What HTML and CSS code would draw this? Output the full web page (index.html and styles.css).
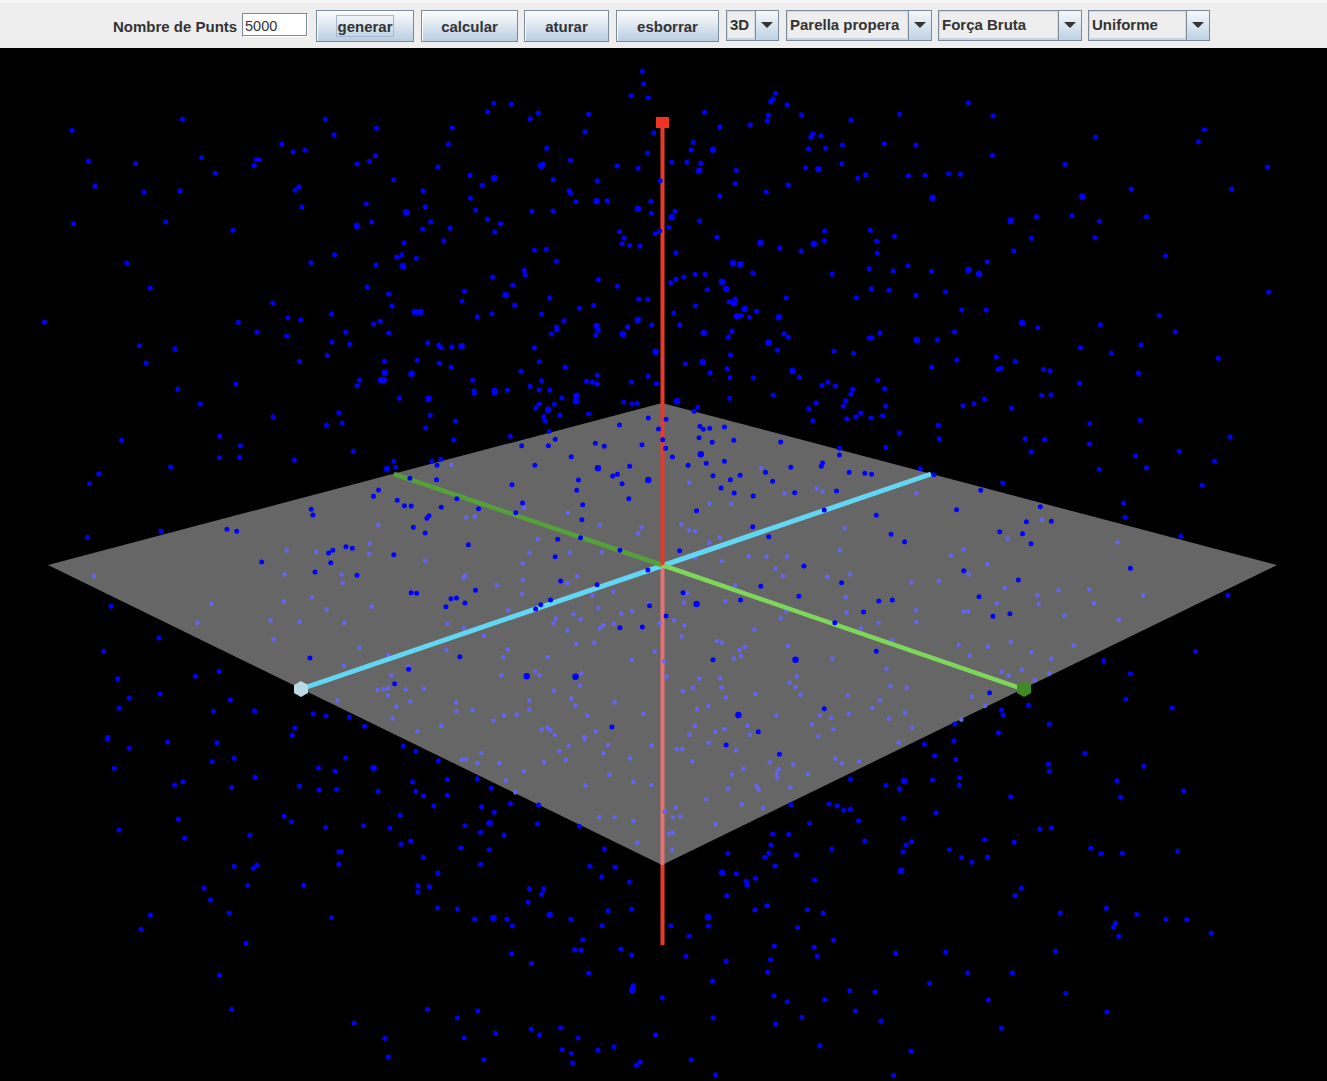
FILE: index.html
```html
<!DOCTYPE html>
<html lang="ca">
<head>
<meta charset="utf-8">
<title>Parella propera</title>
<link rel="stylesheet" href="styles.css">
</head>
<body>
<header class="toolbar">
  <span class="label">Nombre de Punts</span>
  <input class="field" type="text" value="5000">
  <button class="btn w-generar" type="button"><span class="focus">generar</span></button>
  <button class="btn w-calcular" type="button">calcular</button>
  <button class="btn w-aturar" type="button">aturar</button>
  <button class="btn w-esborrar" type="button">esborrar</button>
  <div class="combo w-3d"><span class="combo-text">3D</span><span class="combo-arrow"></span></div>
  <div class="combo w-parella"><span class="combo-text">Parella propera</span><span class="combo-arrow"></span></div>
  <div class="combo w-forca"><span class="combo-text">Força Bruta</span><span class="combo-arrow"></span></div>
  <div class="combo w-uniforme"><span class="combo-text">Uniforme</span><span class="combo-arrow"></span></div>
</header>
<svg class="scene" viewBox="0 48 1327 1033" width="1327" height="1033" xmlns="http://www.w3.org/2000/svg">
  <polygon class="plane" points="48,565 662,403 1277,565 662,865"/>
  <line class="axis-red-soft" x1="662.5" y1="565" x2="662.5" y2="865"/>
  <g transform="translate(0 393) scale(.42347 .33333)">
    <path class="dot light" d="M1066 215h0M222 550h0M1238 345h0M1341 360h0M1121 371h0M1101 373h0M893 396h0M1417 397h0M1515 403h0M1507 421h0M1270 438h0M873 452h0M677 472h0M747 477h0M872 483h0M1250 479h0M1346 479h0M1421 478h0M1004 503h0M1234 511h0M672 544h0M806 545h0M809 570h0M1098 548h0M1094 555h0M1234 561h0M1173 576h0M1340 571h0M1363 550h0M737 612h0M499 633h0M671 626h0M1233 603h0M1399 607h0M1448 595h0M878 641h0M771 650h0M1413 645h0M1532 632h0M1467 662h0M1493 655h0M1354 664h0M1313 677h0M1371 679h0M639 682h0M707 686h0M466 689h0M813 689h0M1057 693h0M1200 652h0M1307 691h0M1340 712h0M1095 706h0M1143 729h0M1424 697h0M1449 692h0M1416 706h0M1557 690h0M646 739h0M849 765h0M1361 753h0M1403 749h0M1199 769h0M1054 771h0M1546 775h0M917 786h0M1188 792h0M1293 792h0M1492 801h0M812 819h0M965 820h0M924 847h0M1184 846h0M1264 836h0M1274 847h0M1373 841h0M1370 878h0M1001 887h0M892 891h0M905 888h0M917 885h0M958 889h0M916 907h0M1308 893h0M797 923h0M969 925h0M936 941h0M1077 929h0M1349 917h0M1359 937h0M1451 928h0M1078 955h0M1116 951h0M1250 923h0M1250 950h0M1387 967h0M927 976h0M1190 968h0M1220 965h0M1165 983h0M1042 999h0M986 1014h0M1279 1010h0M1293 1005h0M1300 1012h0M1407 1015h0M1310 1026h0M1380 1033h0M1519 963h0"/>
  </g>
  <g transform="translate(664 393) scale(.42283 .33333)">
    <path class="dot light" d="M229 225h0M597 301h0M60 269h0M285 302h0M361 286h0M375 296h0M107 331h0M159 333h0M41 394h0M59 412h0M74 414h0M427 406h0M132 434h0M107 449h0M894 380h0M813 437h0M708 469h0M679 488h0M765 514h0M200 490h0M242 491h0M291 491h0M137 504h0M73 495h0M416 472h0M1072 448h0M264 527h0M281 549h0M386 551h0M440 544h0M721 544h0M585 568h0M650 564h0M168 577h0M806 585h0M933 592h0M1006 589h0M55 601h0M430 612h0M47 629h0M145 624h0M883 606h0M886 633h0M787 631h0M1133 606h0M1017 630h0M432 659h0M709 656h0M720 654h0M596 652h0M289 655h0M276 676h0M24 682h0M48 697h0M597 687h0M507 690h0M1076 681h0M947 668h0M214 710h0M466 706h0M42 731h0M125 744h0M137 749h0M697 756h0M540 742h0M766 761h0M820 747h0M969 757h0M293 759h0M179 771h0M191 762h0M182 789h0M165 796h0M723 788h0M869 778h0M916 797h0M398 797h0M1 805h0M526 828h0M846 830h0M799 837h0M815 848h0M911 842h0M877 862h0M6 851h0M83 857h0M133 856h0M314 850h0M297 869h0M311 882h0M136 883h0M69 885h0M44 894h0M535 879h0M574 884h0M216 903h0M323 905h0M435 908h0M728 911h0M146 914h0M511 922h0M78 948h0M105 940h0M493 945h0M759 939h0M266 968h0M369 967h0M395 974h0M437 963h0M532 977h0M570 959h0M350 994h0M73 999h0M197 998h0M143 1008h0M401 1008h0M587 1005h0M121 1017h0M703 980h0M60 1025h0M203 1025h0M365 1030h0"/>
  </g>
  <g transform="translate(0 738) scale(.42347 .33333)">
    <path class="dot light" d="M1381 4h0M1343 24h0M1435 21h0M1539 23h0M1321 39h0M1137 45h0M1425 46h0M1090 66h0M1101 64h0M1127 75h0M1179 75h0M1285 73h0M1336 66h0M1488 61h0M1237 99h0M1439 110h0M1195 128h0M1496 132h0M1382 142h0M1538 141h0M1217 163h0M1272 201h0M1415 237h0M1451 237h0M1496 249h0M1505 314h0"/>
  </g>
  <g transform="translate(664 738) scale(.42283 .33333)">
    <path class="dot light" d="M106 14h0M30 33h0M43 33h0M170 37h0M555 14h0M67 70h0M250 73h0M305 79h0M405 62h0M421 76h0M461 70h0M188 92h0M271 93h0M161 109h0M267 107h0M340 108h0M268 121h0M152 152h0M219 145h0M224 155h0M299 148h0M100 184h0M184 199h0M234 211h0M28 210h0M21 238h0M39 235h0M2 221h0M122 259h0M21 284h0M11 288h0M19 337h0"/>
  </g>
  <line class="axis-cyan" x1="301" y1="689" x2="931" y2="474"/>
  <line class="axis-green-far" x1="394" y1="474" x2="662" y2="565"/>
  <line class="axis-green-near" x1="662" y1="565" x2="1023" y2="689"/>
  <line class="axis-red" x1="662.5" y1="122" x2="662.5" y2="565"/>
  <line class="axis-red" x1="662.5" y1="865" x2="662.5" y2="945"/>
  <rect class="cap-red" x="656" y="117" width="13" height="11"/>
  <polygon class="cap-cyan" points="301,681 308,685 308,693 301,697 294,693 294,685"/>
  <polygon class="cap-green" points="1024,681 1031,685 1031,693 1024,697 1017,693 1017,685"/>
  <g transform="translate(0 48) scale(.42347 .33333)">
    <path class="dot" d="M1517 70h0M1520 108h0M1490 143h0M1531 149h0M1166 166h0M1207 169h0M1152 192h0M1271 195h0M1252 212h0M1390 199h0M431 214h0M768 213h0M889 241h0M1068 240h0M170 247h0M789 260h0M1381 252h0M1544 254h0M666 289h0M1059 289h0M692 312h0M720 307h0M1291 301h0M1529 315h0M476 329h0M209 339h0M320 346h0M613 335h0M605 335h0M886 323h0M872 340h0M843 348h0M1347 337h0M1283 349h0M1457 354h0M1507 361h0M1034 357h0M600 353h0M508 376h0M1110 381h0M1306 395h0M1410 398h0M1559 398h0M930 395h0M224 415h0M706 416h0M697 427h0M425 428h0M999 428h0M340 433h0M1139 412h0M1111 450h0M1344 428h0M1347 435h0M1360 461h0M1434 458h0M1537 460h0M865 468h0M1004 476h0M713 476h0M1123 487h0M1256 490h0M1306 489h0M1538 495h0M1151 513h0M173 527h0M391 522h0M878 522h0M1017 521h0M1182 527h0M550 547h0M998 543h0M1063 541h0M1168 552h0M1463 551h0M1474 570h0M1547 557h0M1558 549h0M954 584h0M1048 578h0M1469 587h0M1487 592h0M1511 595h0M1262 606h0M1290 604h0M790 620h0M949 620h0M937 627h0M734 644h0M983 631h0M299 645h0M888 651h0M1314 640h0M1238 667h0M1240 680h0M1163 687h0M1413 695h0M1211 711h0M1458 715h0M355 720h0M867 717h0M1097 730h0M918 738h0M1508 753h0M1530 754h0M1091 760h0M644 765h0M1298 751h0M926 774h0M1402 772h0M1215 771h0M1368 781h0M783 799h0M1162 797h0M1279 799h0M1127 806h0M1332 818h0M680 809h0M710 816h0M105 822h0M563 823h0M898 820h0M882 828h0M1314 837h0M1539 831h0M1482 836h0M607 853h0M817 853h0M677 864h0M918 855h0M1315 846h0M1413 847h0M1407 861h0M1302 858h0M1010 884h0M784 882h0M826 889h0M1036 891h0M1041 898h0M1067 896h0M329 893h0M413 902h0M1262 899h0M707 940h0M773 922h0M345 945h0M908 940h0M985 937h0M1037 945h0M1273 941h0M1065 957h0M1334 957h0M1230 970h0M1410 981h0M1530 985h0M420 1023h0M557 1008h0M849 997h0M843 1013h0M1116 997h0M1279 998h0M1385 1000h0M1399 1003h0M1410 1008h0M1491 1002h0M1550 1007h0M1252 1015h0M1119 1028h0M1273 1025h0M1298 1027h0M1198 1027h0"/>
    <path class="dot big" d="M1167 390h0M1278 353h0M1409 460h0M1506 482h0M959 493h0M843 533h0M952 654h0M1194 741h0M980 792h0M992 792h0M1090 895h0M1409 834h0M1471 858h0M1506 815h0M1548 911h0M909 974h0M972 977h0M900 997h0M906 997h0M1168 1029h0"/>
  </g>
  <g transform="translate(664 48) scale(.42283 .33333)">
    <path class="dot" d="M264 136h0M258 153h0M252 161h0M291 170h0M720 164h0M96 193h0M325 200h0M557 199h0M778 204h0M247 202h0M442 217h0M244 218h0M132 236h0M204 230h0M352 257h0M347 267h0M371 264h0M69 283h0M1278 245h0M1021 267h0M1264 281h0M64 306h0M342 302h0M382 301h0M422 291h0M521 287h0M596 291h0M777 322h0M18 343h0M54 343h0M87 346h0M421 347h0M948 349h0M1427 357h0M171 367h0M335 360h0M477 380h0M458 391h0M578 383h0M617 382h0M673 377h0M701 379h0M168 407h0M294 411h0M242 432h0M132 444h0M1105 423h0M1343 423h0M26 490h0M84 519h0M11 538h0M881 506h0M965 503h0M1030 520h0M1141 506h0M380 548h0M488 547h0M545 565h0M125 567h0M503 580h0M379 578h0M274 601h0M324 609h0M28 614h0M504 615h0M1019 569h0M869 571h0M827 608h0M1186 624h0M764 641h0M577 653h0M542 668h0M632 670h0M485 662h0M398 678h0M210 675h0M73 679h0M97 679h0M47 687h0M28 693h0M16 704h0M138 701h0M102 725h0M490 722h0M532 727h0M596 741h0M666 732h0M289 750h0M455 749h0M168 753h0M154 761h0M74 774h0M219 790h0M23 795h0M37 830h0M202 808h0M182 803h0M704 786h0M762 786h0M1430 732h0M1171 802h0M1032 830h0M884 839h0M687 852h0M161 849h0M284 857h0M294 868h0M152 867h0M511 854h0M485 871h0M492 869h0M646 876h0M268 907h0M402 909h0M448 916h0M157 920h0M1128 890h0M1058 915h0M985 899h0M1209 852h0M1311 931h0M786 927h0M830 940h0M692 936h0M633 957h0M50 947h0M109 974h0M897 964h0M913 968h0M797 961h0M790 964h0M1122 975h0M149 962h0M156 989h0M211 990h0M320 988h0M405 1014h0M388 1003h0M506 997h0M983 1005h0M522 1022h0M446 1024h0M374 1012h0"/>
    <path class="dot big" d="M18 508h0M228 585h0M354 587h0M163 646h0M180 649h0M137 701h0M191 783h0M173 805h0M94 855h0M165 766h0M272 808h0M304 969h0M247 884h0M635 449h0M820 518h0M720 665h0M745 677h0M847 825h0M92 942h0M598 876h0M147 723h0M365 364h0M83 368h0M989 446h0M116 305h0"/>
  </g>
  <g transform="translate(0 393) scale(.42347 .33333)">
    <path class="dot" d="M943 16h0M473 33h0M1120 0h0M1168 0h0M1327 15h0M1473 27h0M1493 33h0M1505 31h0M1273 33h0M1309 34h0M1265 46h0M1016 67h0M645 71h0M800 59h0M1284 71h0M1287 84h0M1322 66h0M1390 62h0M771 96h0M808 90h0M1076 84h0M1005 105h0M1297 115h0M519 130h0M1205 130h0M287 142h0M1072 141h0M568 158h0M834 175h0M518 194h0M566 192h0M695 202h0M403 222h0M930 205h0M1020 205h0M1041 199h0M1032 217h0M934 223h0M233 242h0M211 272h0M262 640h0M207 433h0M380 415h0M375 735h0M245 775h0M278 857h0M461 850h0M517 835h0M378 903h0M305 916h0M281 946h0M544 921h0M504 955h0M601 953h0M739 963h0M770 969h0M825 972h0M861 1000h0M696 1005h0M690 1026h0M255 1033h0M1531 75h0M1463 96h0M1555 108h0M1565 140h0M1311 139h0M1232 158h0M1295 158h0M1406 151h0M1427 160h0M1516 155h0M1349 191h0M1263 217h0M1487 220h0M1447 249h0M1458 244h0M1366 261h0M1209 275h0M1469 272h0M1031 260h0M968 256h0M894 291h0M882 310h0M1362 292h0M1485 317h0M1079 317h0M938 322h0M955 338h0M971 339h0M1042 343h0M1130 347h0M1376 335h0M1234 330h0M1218 359h0M1374 380h0M1013 368h0M1008 376h0M735 349h0M739 366h0M976 403h0M1004 420h0M536 409h0M559 415h0M1317 439h0M1371 434h0M1464 472h0M1106 455h0M817 461h0M832 466h0M786 472h0M776 480h0M930 485h0M618 507h0M1311 491h0M781 509h0M744 537h0M843 547h0M1530 531h0M1410 575h0M1324 564h0M1123 592h0M971 599h0M984 601h0M1065 617h0M1078 615h0M1098 630h0M1053 641h0M1300 621h0M1277 635h0M1265 648h0M1534 638h0M1464 704h0M1517 702h0M732 795h0M1086 791h0M965 829h0M932 872h0M1445 1002h0"/>
    <path class="dot big" d="M1012 17h0M1361 8h0M1360 25h0M1294 50h0M914 228h0M1412 226h0M1531 261h0M1244 850h0M1359 851h0"/>
  </g>
  <g transform="translate(664 393) scale(.42283 .33333)">
    <path class="dot" d="M155 16h0M258 6h0M360 29h0M430 23h0M442 3h0M893 7h0M915 5h0M80 43h0M71 55h0M342 47h0M424 40h0M524 40h0M465 60h0M454 71h0M432 77h0M489 75h0M517 68h0M352 83h0M707 38h0M733 32h0M758 18h0M822 46h0M1126 82h0M1007 92h0M649 97h0M556 119h0M651 137h0M1339 131h0M854 137h0M900 140h0M1006 153h0M524 163h0M868 177h0M1218 175h0M1115 189h0M1302 204h0M1141 224h0M1029 229h0M606 227h0M801 270h0M1273 277h0M1087 330h0M1090 373h0M1222 430h0M1334 606h0M1257 775h0M1040 803h0M1103 842h0M1092 918h0M1202 945h0M862 937h0M798 951h0M802 966h0M911 994h0M688 993h0M791 1019h0M5 79h0M85 100h0M93 109h0M108 106h0M143 102h0M83 134h0M114 148h0M165 142h0M276 147h0M4 166h0M20 192h0M100 211h0M143 205h0M57 217h0M415 166h0M415 186h0M375 210h0M372 220h0M240 238h0M300 223h0M438 238h0M475 241h0M491 244h0M638 245h0M116 248h0M180 247h0M157 260h0M257 265h0M135 285h0M166 300h0M211 309h0M309 299h0M408 294h0M749 292h0M890 341h0M77 353h0M379 351h0M692 350h0M502 367h0M857 386h0M916 385h0M210 401h0M248 431h0M794 416h0M848 422h0M537 424h0M569 446h0M868 452h0M37 473h0M331 519h0M1103 526h0M709 533h0M838 561h0M420 569h0M229 580h0M45 599h0M319 610h0M181 621h0M508 624h0M540 621h0M745 611h0M472 657h0M778 670h0M818 662h0M5 669h0M404 689h0M502 775h0M116 800h0M770 899h0M379 947h0M223 1016h0"/>
    <path class="dot big" d="M31 25h0M87 184h0M77 633h0M311 800h0M176 966h0"/>
  </g>
  <g transform="translate(0 738) scale(.42347 .33333)">
    <path class="dot" d="M254 2h0M396 13h0M512 14h0M305 31h0M501 71h0M553 61h0M816 60h0M270 91h0M752 90h0M791 99h0M602 117h0M412 141h0M432 131h0M547 148h0M707 145h0M753 156h0M795 154h0M893 160h0M974 132h0M982 160h0M1000 174h0M1056 124h0M1056 171h0M1035 68h0M982 40h0M952 25h0M1127 122h0M1160 151h0M1024 204h0M1205 197h0M1137 206h0M1167 223h0M1272 201h0M421 243h0M671 235h0M688 251h0M769 268h0M858 263h0M921 270h0M945 232h0M1098 263h0M1269 258h0M1368 265h0M281 276h0M590 291h0M436 300h0M1135 283h0M1190 291h0M947 319h0M970 309h0M1088 330h0M1155 335h0M1427 333h0M800 341h0M806 341h0M999 358h0M553 385h0M607 381h0M598 391h0M800 379h0M1135 379h0M1393 385h0M1452 387h0M1034 405h0M1421 416h0M1486 432h0M717 441h0M585 442h0M482 451h0M987 443h0M1014 446h0M987 462h0M497 486h0M1250 452h0M1284 452h0M1279 469h0M1247 493h0M1033 510h0M1080 513h0M541 525h0M355 531h0M783 539h0M1121 543h0M1197 543h0M1210 563h0M1348 544h0M1422 563h0M1436 518h0M1492 513h0M333 574h0M581 615h0M1376 605h0M1357 635h0M1372 637h0M1466 633h0M1492 651h0M1208 648h0M1255 676h0M1390 705h0M518 711h0M1495 743h0M1564 779h0M547 814h0M1009 814h0M1128 818h0M836 855h0M1080 840h0M909 901h0M1096 899h0M1170 886h0M1254 873h0M1274 890h0M1324 869h0M1365 900h0M1548 890h0M917 957h0M1143 965h0M1327 935h0M1349 946h0M1412 937h0M1450 926h0M1352 975h0M1503 982h0M1512 972h0"/>
    <path class="dot big" d="M882 90h0M1156 256h0M1165 540h0M1298 530h0M1493 756h0"/>
  </g>
  <g transform="translate(664 738) scale(.42283 .33333)">
    <path class="dot" d="M147 21h0M273 49h0M686 8h0M616 19h0M995 46h0M640 53h0M690 64h0M909 79h0M911 100h0M1135 85h0M1071 128h0M441 124h0M635 126h0M699 119h0M525 142h0M557 152h0M698 141h0M1229 158h0M820 176h0M1080 178h0M390 198h0M409 203h0M425 217h0M441 214h0M300 200h0M567 241h0M460 248h0M643 224h0M344 256h0M889 273h0M916 270h0M257 288h0M295 289h0M758 305h0M585 311h0M475 309h0M573 321h0M828 313h0M253 321h0M397 333h0M1009 331h0M675 335h0M151 346h0M248 345h0M238 358h0M565 342h0M313 350h0M704 359h0M1033 347h0M1084 346h0M1215 340h0M765 357h0M262 384h0M728 373h0M171 407h0M216 421h0M195 430h0M196 441h0M356 426h0M845 451h0M830 473h0M148 473h0M243 503h0M215 516h0M339 515h0M376 525h0M937 525h0M1046 511h0M1118 529h0M105 564h0M16 563h0M1068 555h0M1063 567h0M1187 544h0M1236 545h0M316 569h0M59 594h0M1075 595h0M1294 585h0M401 607h0M261 624h0M355 628h0M362 655h0M548 645h0M666 643h0M926 639h0M52 655h0M147 669h0M252 665h0M245 703h0M718 704h0M824 705h0M115 729h0M628 736h0M260 773h0M439 758h0M499 762h0M291 791h0M380 785h0M767 786h0M950 766h0M453 819h0M1047 822h0M116 840h0M326 838h0M264 859h0M513 849h0M798 871h0M369 923h0M584 939h0M64 965h0M122 1010h0M543 1012h0"/>
    <path class="dot big" d="M568 129h0M137 404h0M561 399h0M104 538h0"/>
  </g>
</svg>
</body>
</html>
```
FILE: styles.css
```css
* { box-sizing: border-box; }
html, body { margin: 0; padding: 0; background: #000; overflow: hidden; }
body { width: 1327px; height: 1081px; font-family: "Liberation Sans", Arial, sans-serif; }

.toolbar {
  display: flex;
  align-items: flex-start;
  height: 48px;
  padding: 10px 0 0 113px;
  gap: 6px;
  background: linear-gradient(#f6f6f6 0 3px, #eeeeee 3px);
  color: #333;
  font-size: 15px;
  font-weight: 700;
}
.label { line-height: 34px; width: 123px; white-space: nowrap; }
.field {
  width: 66px; height: 24px; margin-top: 3px; padding: 1px 2px 0;
  border: 1px solid #7a8a99; border-right-color: #fff; border-bottom-color: #fff;
  box-shadow: inset -1px -1px 0 #7a8a99;
  background: #fff; color: #333;
  font: 400 14.5px "Liberation Sans", Arial, sans-serif;
  outline: none; border-radius: 0;
}
.btn {
  height: 32px; padding: 0; border: 1px solid #7a8a99; border-radius: 0;
  display: flex; align-items: center; justify-content: center;
  background: linear-gradient(#fbfcfd 0%, #e6edf4 35%, #b9cde2 100%);
  color: #333; font: 700 15px "Liberation Sans", Arial, sans-serif;
  box-shadow: inset 1px 1px 0 #fff;
}
.focus { border: 1px solid #a3b8cc; height: 22px; line-height: 22px; padding: 0; width: 58px; text-align: center; white-space: nowrap; }
.w-generar { width: 98px; margin-left: 2px; }
.w-calcular { width: 97px; margin-left: 1px; }
.w-aturar { width: 85px; }
.w-esborrar { width: 103px; margin-left: 1px; }
.combo {
  height: 31px; display: flex; border: 1px solid #7a8a99; background: #eee;
}
.combo-text {
  flex: 1; padding-left: 2px; line-height: 26px; white-space: nowrap;
  border: 1px solid #d3dce6; border-bottom-width: 2px; border-bottom-color: #c6d4e2;
}
.combo-arrow {
  flex: none; width: 23px; position: relative;
  border-left: 1px solid #7a8a99;
  background: linear-gradient(#f5f8fa, #c0d2e4);
}
.combo-arrow::after {
  content: ""; position: absolute; left: 5px; top: 11px;
  border-style: solid; border-width: 6px 6px 0; border-color: #333 transparent transparent;
}
.w-3d { width: 53px; margin-left: 1px; }
.w-parella { width: 146px; margin-left: 1px; }
.w-forca { width: 144px; }
.w-uniforme { width: 122px; }

.scene { display: block; background: #000; }
.plane { fill: #666; }
.axis-red-soft, .axis-red, .axis-cyan, .axis-green-far, .axis-green-near { fill: none; stroke-width: 4.5; }
.axis-red-soft { stroke: #e87070; stroke-width: 4; }
.axis-red { stroke: #e63a2a; stroke-width: 4; }
.axis-cyan { stroke: #62d6f2; stroke-width: 5; }
.axis-green-far { stroke: #56a03a; }
.axis-green-near { stroke: #7ed65a; }
.cap-red { fill: #ee3322; }
.cap-cyan { fill: #bcd9e6; }
.cap-green { fill: #3f8a22; }
.dot {
  fill: none; stroke: #0000ff; stroke-width: 5; stroke-linecap: round;
  vector-effect: non-scaling-stroke;
}
.big { stroke-width: 6.5; }
.light { stroke: #6464f0; stroke-width: 4.6; }
```
